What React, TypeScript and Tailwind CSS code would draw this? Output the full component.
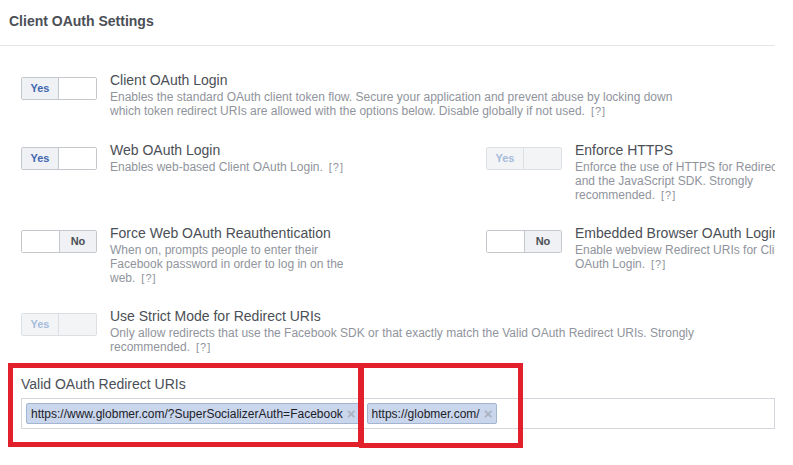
import React from "react";

type ToggleProps = { on: boolean; disabled?: boolean };

// two-segment Yes / No switch
function Toggle({ on, disabled }: ToggleProps) {
  const frame = disabled ? "border-[#dcdfe3]" : "border-[#c4c8cd]";
  const seg = disabled ? "bg-[#f3f4f6]" : "bg-[#eff1f4]";
  const blank = disabled ? "bg-[#f3f4f6]" : "bg-white";
  return (
    <div className={`mt-[7px] flex h-[23px] w-[76px] shrink-0 overflow-hidden rounded-[2px] border ${frame}`}>
      {on ? (
        <>
          <div
            className={`flex w-[37px] items-center justify-center border-r ${frame} ${seg} text-[11px] font-bold ${
              disabled ? "text-[#a5bbdc]" : "text-[#4267b2]"
            }`}
          >
            Yes
          </div>
          <div className={`flex-1 ${blank}`} />
        </>
      ) : (
        <>
          <div className="flex-1 bg-white" />
          <div className={`flex w-[37px] items-center justify-center border-l ${frame} ${seg} text-[11px] font-bold text-[#4b4f56]`}>
            No
          </div>
        </>
      )}
    </div>
  );
}

function Help() {
  return <span className="ml-[6px] text-[11px] tracking-[1px] text-[#90949c]">[?]</span>;
}

type SettingProps = {
  title: string;
  lines: string[];
  on: boolean;
  disabled?: boolean;
  help?: boolean;
};

function Setting({ title, lines, on, disabled, help = true }: SettingProps) {
  return (
    <div className="flex items-start gap-[13px]">
      <Toggle on={on} disabled={disabled} />
      <div className="whitespace-nowrap">
        <div className="text-[14px] leading-[20px] text-[#4b4f56]">{title}</div>
        {lines.map((l, i) => (
          <div key={i} className="text-[12px] leading-[14px] text-[#90949c]">
            {l}
            {help && i === lines.length - 1 && <Help />}
          </div>
        ))}
      </div>
    </div>
  );
}

function Tag({ label }: { label: string }) {
  return (
    <div className="flex h-[21px] items-center gap-[4px] rounded-[2px] border border-[#a3b5d1] bg-[#c9d6ec] pl-[4px] pr-[4px] text-[12px] text-[#1d2129]">
      <span>{label}</span>
      <span className="text-[15px] font-bold leading-none text-[#a9b2bf]">×</span>
    </div>
  );
}

export default function App() {
  return (
    <div className="relative h-[465px] w-[793px] overflow-hidden bg-white font-['Liberation_Sans',Arial,sans-serif]">
      <div className="w-[775px] overflow-hidden">
        <div className="border-b border-[#e5e5e5] px-[9px] pb-[15px] pt-[12px] text-[14px] font-bold leading-[18px] text-[#4b4f56]">
          Client OAuth Settings
        </div>

        <div className="pl-[21px] pt-[24px]">
          <Setting
            title="Client OAuth Login"
            on
            lines={[
              "Enables the standard OAuth client token flow. Secure your application and prevent abuse by locking down",
              "which token redirect URIs are allowed with the options below. Disable globally if not used.",
            ]}
          />

          <div className="mt-[22px] grid grid-cols-[465px_1fr] gap-y-[21px]">
            <Setting title="Web OAuth Login" on lines={["Enables web-based Client OAuth Login."]} />
            <Setting
              title="Enforce HTTPS"
              on
              disabled
              lines={[
                "Enforce the use of HTTPS for Redirect URIs",
                "and the JavaScript SDK. Strongly",
                "recommended.",
              ]}
            />
            <Setting
              title="Force Web OAuth Reauthentication"
              on={false}
              lines={[
                "When on, prompts people to enter their",
                "Facebook password in order to log in on the",
                "web.",
              ]}
            />
            <Setting
              title="Embedded Browser OAuth Login"
              on={false}
              lines={["Enable webview Redirect URIs for Client", "OAuth Login."]}
            />
          </div>

          <div className="mt-[21px]">
            <Setting
              title="Use Strict Mode for Redirect URIs"
              on
              disabled
              lines={[
                "Only allow redirects that use the Facebook SDK or that exactly match the Valid OAuth Redirect URIs. Strongly",
                "recommended.",
              ]}
            />
          </div>

          <div className="mt-[21px] text-[14px] leading-[18px] text-[#4b4f56]">Valid OAuth Redirect URIs</div>
          <div className="mt-[5px] flex h-[31px] items-center gap-[6px] border border-[#d3d6db] pl-[4px]">
            <Tag label="https://www.globmer.com/?SuperSocializerAuth=Facebook" />
            <Tag label="https://globmer.com/" />
          </div>
        </div>
      </div>

      {/* red highlight frames drawn over the URI field */}
      <div className="absolute left-[8px] top-[363px] h-[84px] w-[355px] border-[5px] border-[#e2202b]" />
      <div className="absolute left-[359px] top-[363px] h-[85px] w-[164px] border-[5px] border-[#e2202b]" />
    </div>
  );
}
